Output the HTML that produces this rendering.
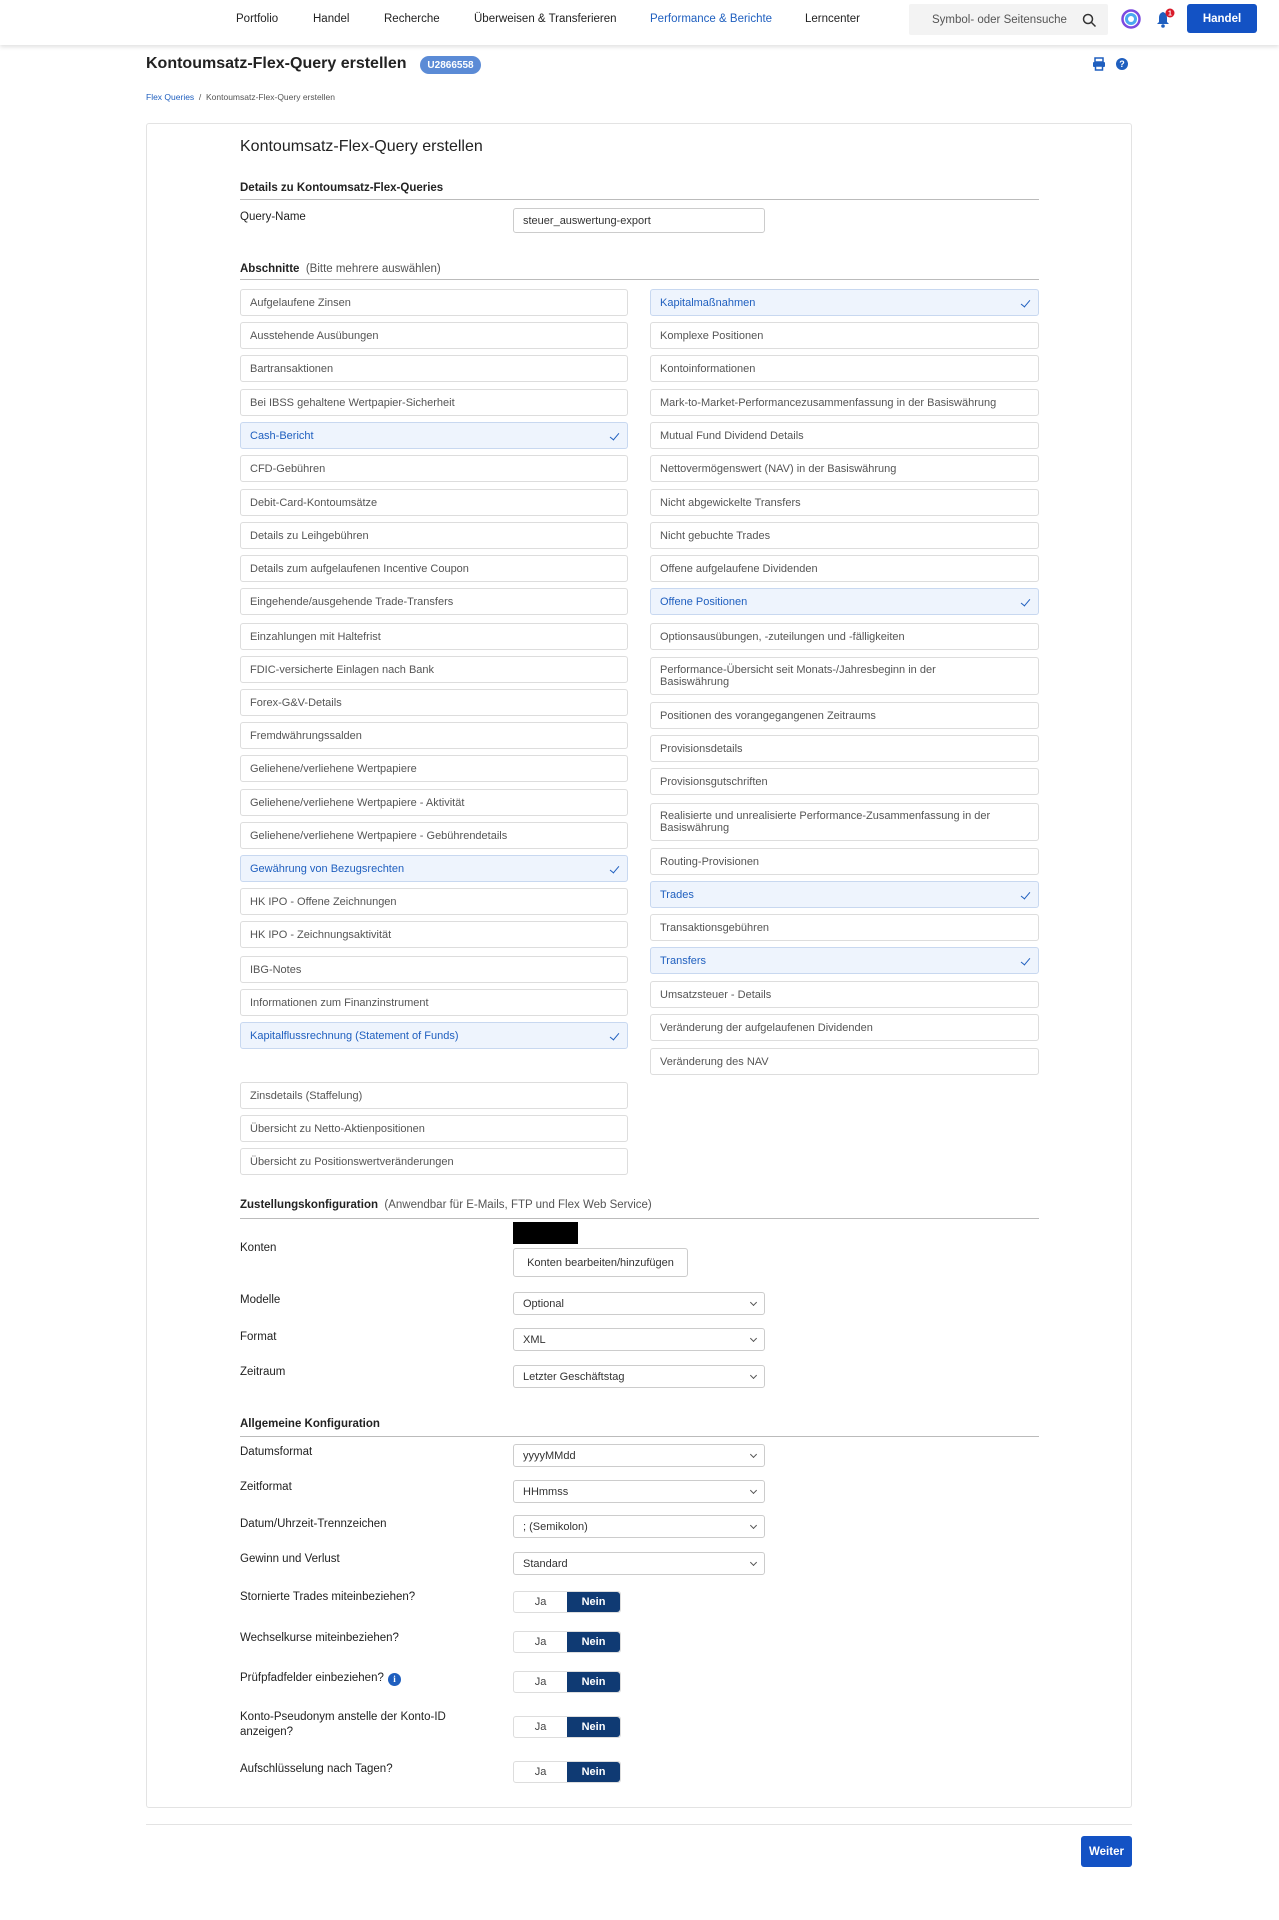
<!DOCTYPE html>
<html><head><meta charset="utf-8"><style>
*{box-sizing:border-box;margin:0;padding:0}
body{width:1279px;height:1920px;background:#fff;font-family:"Liberation Sans",sans-serif;color:#222;position:relative;overflow:hidden}
.a{position:absolute}
.nav{left:0;top:0;width:1279px;height:45px;background:#fff;box-shadow:0 2px 4px rgba(0,0,0,.12)}
.ni{position:absolute;top:13px;font-size:11.5px;color:#222}
.lbl{position:absolute;left:240px;font-size:11.5px;color:#222}
.h{position:absolute;left:240px;font-size:11.5px;font-weight:bold;color:#222}
.line{position:absolute;left:240px;width:799px;height:1px;background:#bbb}
.b{position:absolute;height:27px;border:1px solid #ddd;border-radius:3px;font-size:11px;color:#555;padding:0 9px;display:flex;align-items:center;background:#fff}
.L{left:240px;width:388px}.R{left:650px;width:389px}
.s{background:#eef4fd;border-color:#c8d8f0;color:#1f5fbf}
.s:after{content:"";position:absolute;right:10px;top:8px;width:4px;height:8px;border:solid #1f5fbf;border-width:0 1.5px 1.5px 0;transform:rotate(40deg)}
.t2{height:38px;line-height:12px}
.sel{position:absolute;left:513px;width:252px;height:23px;border:1px solid #ccc;border-radius:3px;font-size:11px;color:#333;padding:5px 9px}
.sel:after{content:"";position:absolute;right:8px;top:7px;width:4px;height:4px;border:solid #555;border-width:0 1px 1px 0;transform:rotate(45deg)}
.q:after{display:none}
.tg{position:absolute;left:513px;width:108px;height:22px;border:1px solid #ddd;border-radius:3px;font-size:11px;display:flex}
.tg span{flex:1;display:flex;align-items:center;justify-content:center;color:#444}
.tg span+span{background:#0f3a73;color:#fff;font-weight:bold;border-radius:0 3px 3px 0}
</style></head><body>
<div class="a nav">
<div class="ni" style="left:236px">Portfolio</div>
<div class="ni" style="left:313px">Handel</div>
<div class="ni" style="left:384px">Recherche</div>
<div class="ni" style="left:474px">Überweisen &amp; Transferieren</div>
<div class="ni" style="left:650px;color:#1f5fbf">Performance &amp; Berichte</div>
<div class="ni" style="left:805px">Lerncenter</div>
<div class="a" style="left:909px;top:4px;width:199px;height:31px;background:#f3f3f3;border-radius:2px"><span class="a" style="left:23px;top:10px;font-size:11.5px;color:#555">Symbol- oder Seitensuche</span>
<svg class="a" style="left:173px;top:9px" width="15" height="15" viewBox="0 0 15 15"><circle cx="6" cy="6" r="4.5" fill="none" stroke="#333" stroke-width="1.5"/><path d="M9.5 9.5L13.5 13.5" stroke="#333" stroke-width="1.5"/></svg></div>
<svg class="a" style="left:1121px;top:9px" width="20" height="20" viewBox="0 0 20 20"><circle cx="10" cy="10" r="8.5" fill="none" stroke="#7b4ae0" stroke-width="2.5"/><circle cx="10" cy="10" r="6" fill="#4aa8f0"/><circle cx="10" cy="10" r="3" fill="#fff"/></svg>
<svg class="a" style="left:1154px;top:8px" width="22" height="22" viewBox="0 0 22 22"><path d="M9 4c-3 1-4 3-4 6v4l-2 2h12l-2-2v-4c0-3-1-5-4-6z" fill="#1f5fbf"/><circle cx="9" cy="18" r="1.8" fill="#1f5fbf"/><circle cx="16" cy="5" r="4.5" fill="#d91a2a"/><text x="16" y="7.5" font-size="7" fill="#fff" text-anchor="middle" font-family="Liberation Sans" font-weight="bold">1</text></svg>
<div class="a" style="left:1187px;top:4px;width:70px;height:29px;background:#1352c4;border-radius:3px;color:#fff;font-size:11.5px;font-weight:bold;display:flex;align-items:center;justify-content:center">Handel</div>
</div>
<div class="a" style="left:146px;top:55px;font-size:16px;font-weight:bold;color:#222">Kontoumsatz-Flex-Query erstellen</div>
<div class="a" style="left:420px;top:56px;width:61px;height:18px;background:#5b8bd6;border-radius:9px;color:#fff;font-size:10px;font-weight:bold;display:flex;align-items:center;justify-content:center">U2866558</div>
<svg class="a" style="left:1092px;top:57px" width="14" height="14" viewBox="0 0 14 14"><rect x="3" y="1" width="8" height="4" fill="none" stroke="#1f5fbf" stroke-width="1.5"/><rect x="1" y="5" width="12" height="5" rx="1" fill="#1f5fbf"/><rect x="3.5" y="9" width="7" height="4" fill="#fff" stroke="#1f5fbf" stroke-width="1.5"/></svg>
<div class="a" style="left:1116px;top:58px;width:12px;height:12px;border-radius:50%;background:#1f5fbf;color:#fff;font-size:9px;font-weight:bold;text-align:center;line-height:12px">?</div>
<div class="a" style="left:146px;top:92px;font-size:8.5px;color:#555"><span style="color:#1f5fbf">Flex Queries</span> &nbsp;/&nbsp; Kontoumsatz-Flex-Query erstellen</div>
<div class="a" style="left:146px;top:123px;width:986px;height:1685px;border:1px solid #e3e3e3;border-radius:3px"></div>
<div class="a" style="left:240px;top:138px;font-size:16px;color:#222">Kontoumsatz-Flex-Query erstellen</div>
<div class="h" style="top:182px">Details zu Kontoumsatz-Flex-Queries</div><div class="line" style="top:199px"></div>
<div class="lbl" style="top:211px">Query-Name</div>
<div class="sel q" style="top:208px;height:25px;padding-top:6px">steuer_auswertung-export</div>
<div class="h" style="top:263px">Abschnitte <span style="font-weight:normal;color:#555">&nbsp;(Bitte mehrere auswählen)</span></div><div class="line" style="top:279px"></div>
<div class="b L" style="top:289px">Aufgelaufene Zinsen</div>
<div class="b L" style="top:322px">Ausstehende Ausübungen</div>
<div class="b L" style="top:355px">Bartransaktionen</div>
<div class="b L" style="top:389px">Bei IBSS gehaltene Wertpapier-Sicherheit</div>
<div class="b L s" style="top:422px">Cash-Bericht</div>
<div class="b L" style="top:455px">CFD-Gebühren</div>
<div class="b L" style="top:489px">Debit-Card-Kontoumsätze</div>
<div class="b L" style="top:522px">Details zu Leihgebühren</div>
<div class="b L" style="top:555px">Details zum aufgelaufenen Incentive Coupon</div>
<div class="b L" style="top:588px">Eingehende/ausgehende Trade-Transfers</div>
<div class="b L" style="top:623px">Einzahlungen mit Haltefrist</div>
<div class="b L" style="top:656px">FDIC-versicherte Einlagen nach Bank</div>
<div class="b L" style="top:689px">Forex-G&amp;V-Details</div>
<div class="b L" style="top:722px">Fremdwährungssalden</div>
<div class="b L" style="top:755px">Geliehene/verliehene Wertpapiere</div>
<div class="b L" style="top:789px">Geliehene/verliehene Wertpapiere - Aktivität</div>
<div class="b L" style="top:822px">Geliehene/verliehene Wertpapiere - Gebührendetails</div>
<div class="b L s" style="top:855px">Gewährung von Bezugsrechten</div>
<div class="b L" style="top:888px">HK IPO - Offene Zeichnungen</div>
<div class="b L" style="top:921px">HK IPO - Zeichnungsaktivität</div>
<div class="b L" style="top:956px">IBG-Notes</div>
<div class="b L" style="top:989px">Informationen zum Finanzinstrument</div>
<div class="b L s" style="top:1022px">Kapitalflussrechnung (Statement of Funds)</div>
<div class="b L" style="top:1082px">Zinsdetails (Staffelung)</div>
<div class="b L" style="top:1115px">Übersicht zu Netto-Aktienpositionen</div>
<div class="b L" style="top:1148px">Übersicht zu Positionswertveränderungen</div>
<div class="b R s" style="top:289px">Kapitalmaßnahmen</div>
<div class="b R" style="top:322px">Komplexe Positionen</div>
<div class="b R" style="top:355px">Kontoinformationen</div>
<div class="b R" style="top:389px">Mark-to-Market-Performancezusammenfassung in der Basiswährung</div>
<div class="b R" style="top:422px">Mutual Fund Dividend Details</div>
<div class="b R" style="top:455px">Nettovermögenswert (NAV) in der Basiswährung</div>
<div class="b R" style="top:489px">Nicht abgewickelte Transfers</div>
<div class="b R" style="top:522px">Nicht gebuchte Trades</div>
<div class="b R" style="top:555px">Offene aufgelaufene Dividenden</div>
<div class="b R s" style="top:588px">Offene Positionen</div>
<div class="b R" style="top:623px">Optionsausübungen, -zuteilungen und -fälligkeiten</div>
<div class="b R t2" style="top:657px">Performance-Übersicht seit Monats-/Jahresbeginn in der<br>Basiswährung</div>
<div class="b R" style="top:702px">Positionen des vorangegangenen Zeitraums</div>
<div class="b R" style="top:735px">Provisionsdetails</div>
<div class="b R" style="top:768px">Provisionsgutschriften</div>
<div class="b R t2" style="top:803px">Realisierte und unrealisierte Performance-Zusammenfassung in der<br>Basiswährung</div>
<div class="b R" style="top:848px">Routing-Provisionen</div>
<div class="b R s" style="top:881px">Trades</div>
<div class="b R" style="top:914px">Transaktionsgebühren</div>
<div class="b R s" style="top:947px">Transfers</div>
<div class="b R" style="top:981px">Umsatzsteuer - Details</div>
<div class="b R" style="top:1014px">Veränderung der aufgelaufenen Dividenden</div>
<div class="b R" style="top:1048px">Veränderung des NAV</div>
<div class="h" style="top:1199px">Zustellungskonfiguration <span style="font-weight:normal;color:#555">&nbsp;(Anwendbar für E-Mails, FTP und Flex Web Service)</span></div><div class="line" style="top:1218px"></div>
<div class="a" style="left:513px;top:1222px;width:65px;height:22px;background:#000"></div>
<div class="lbl" style="top:1242px">Konten</div>
<div class="a" style="left:513px;top:1248px;width:175px;height:29px;border:1px solid #ccc;border-radius:3px;font-size:11px;color:#333;display:flex;align-items:center;justify-content:center">Konten bearbeiten/hinzufügen</div>
<div class="lbl" style="top:1294px">Modelle</div><div class="sel" style="top:1292px">Optional</div>
<div class="lbl" style="top:1331px">Format</div><div class="sel" style="top:1328px">XML</div>
<div class="lbl" style="top:1366px">Zeitraum</div><div class="sel" style="top:1365px">Letzter Geschäftstag</div>
<div class="h" style="top:1418px">Allgemeine Konfiguration</div><div class="line" style="top:1436px"></div>
<div class="lbl" style="top:1446px">Datumsformat</div><div class="sel" style="top:1444px">yyyyMMdd</div>
<div class="lbl" style="top:1481px">Zeitformat</div><div class="sel" style="top:1480px">HHmmss</div>
<div class="lbl" style="top:1518px">Datum/Uhrzeit-Trennzeichen</div><div class="sel" style="top:1515px">; (Semikolon)</div>
<div class="lbl" style="top:1553px">Gewinn und Verlust</div><div class="sel" style="top:1552px">Standard</div>
<div class="lbl" style="top:1591px">Stornierte Trades miteinbeziehen?</div><div class="tg" style="top:1591px"><span>Ja</span><span>Nein</span></div>
<div class="lbl" style="top:1632px">Wechselkurse miteinbeziehen?</div><div class="tg" style="top:1631px"><span>Ja</span><span>Nein</span></div>
<div class="lbl" style="top:1672px">Prüfpfadfelder einbeziehen?</div>
<div class="a" style="left:388px;top:1673px;width:13px;height:13px;border-radius:50%;background:#1f5fbf;color:#fff;font-size:9px;font-weight:bold;text-align:center;line-height:13px;font-family:'Liberation Serif',serif">i</div>
<div class="tg" style="top:1671px"><span>Ja</span><span>Nein</span></div>
<div class="lbl" style="top:1710px;line-height:15px">Konto-Pseudonym anstelle der Konto-ID<br>anzeigen?</div><div class="tg" style="top:1716px"><span>Ja</span><span>Nein</span></div>
<div class="lbl" style="top:1763px">Aufschlüsselung nach Tagen?</div><div class="tg" style="top:1761px"><span>Ja</span><span>Nein</span></div>
<div class="a" style="left:146px;top:1824px;width:986px;height:1px;background:#e3e3e3"></div>
<div class="a" style="left:1081px;top:1836px;width:51px;height:31px;background:#1352c4;border-radius:3px;color:#fff;font-size:11.5px;font-weight:bold;display:flex;align-items:center;justify-content:center">Weiter</div>
</body></html>
